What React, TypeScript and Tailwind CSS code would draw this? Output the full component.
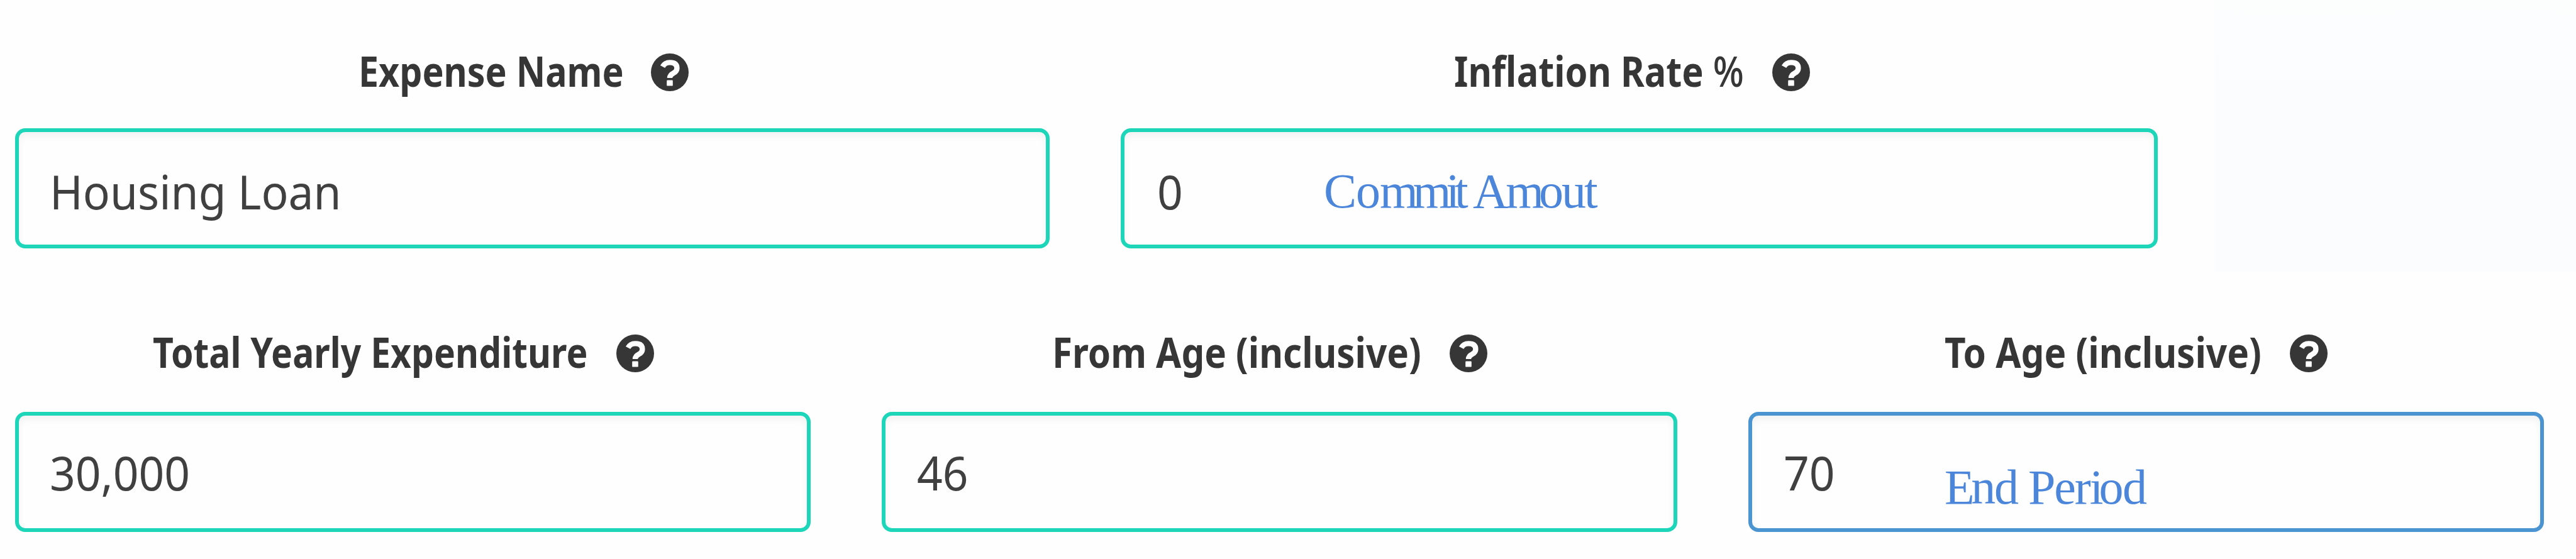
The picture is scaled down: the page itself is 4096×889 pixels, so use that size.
import type { ReactNode } from "react";

type FieldProps = {
  label: ReactNode;
  value: string;
  width: string;
  labelGap: string;
  labelStart: string;
  labelWidth: string;
  labelScale: string;
  valueInset: string;
  tone?: string;
  children?: ReactNode;
};

function HelpIcon() {
  return (
    <svg viewBox="0 0 100 100" className="mt-[5px] size-[60px] shrink-0" aria-hidden="true">
      <circle cx="50" cy="50" r="50" fill="#363636" />
      <path d="M31 35Q37 24 50 24Q69 24 69 39Q69 47 60 52Q50 57 50 65" fill="none" stroke="#fefefe" strokeWidth="14" />
      <rect x="42" y="71" width="16" height="15" rx="2" fill="#fefefe" />
    </svg>
  );
}

function Field(p: FieldProps) {
  return (
    <div className={`flex flex-col ${p.width} ${p.labelGap}`}>
      <div className={`flex h-[80px] items-center text-[#363636] ${p.labelStart}`}>
        <label className={`block whitespace-nowrap ${p.labelWidth}`}>
          <span className={`inline-block origin-left text-[67px] leading-[80px] font-bold ${p.labelScale}`}>{p.label}</span>
        </label>
        <HelpIcon />
      </div>
      <div
        className={`relative h-[191px] rounded-[16px] border-[6px] bg-[#fefefe] shadow-[inset_0_6px_12px_rgba(10,10,10,0.05)] ${p.valueInset} ${p.tone ?? "border-[#1dd6ba]"}`}
      >
        <span className="inline-block origin-left scale-x-[0.957] text-[74.5px] leading-[100px] whitespace-nowrap text-[#404040]">
          {p.value}
        </span>
        {p.children}
      </div>
    </div>
  );
}

export default function App() {
  return (
    <main className="h-[889px] w-[4096px] overflow-hidden bg-[#fefefe] font-['Noto_Sans',sans-serif]">
      <div className="flex h-[432px] justify-between">
        <div className="flex gap-[113px] pt-[72px] pl-[24px]">
          <Field
            label="Expense Name"
            value="Housing Loan"
            width="w-[1645px]"
            labelGap="gap-[52px]"
            labelStart="pl-[546px]"
            labelWidth="w-[465px]"
            labelScale="scale-x-[0.855]"
            valueInset="pt-[44px] pl-[49px]"
          />
          <Field
            label={<>Inflation Rate <span className="font-medium">%</span></>}
            value="0"
            width="w-[1649px]"
            labelGap="gap-[52px]"
            labelStart="pl-[530px]"
            labelWidth="w-[506px]"
            labelScale="scale-x-[0.86]"
            valueInset="pt-[44px] pl-[52px]"
          >
            <span className="absolute top-[44px] left-[317px] font-['Liberation_Serif',serif] text-[78px] leading-[100px] whitespace-nowrap text-[#4c86da]">
              <span className="tracking-[-1px]">Co</span>
              <span className="tracking-[-8px]">mmi</span>
              <span className="tracking-[-4px]">t A</span>
              <span className="tracking-[-8px]">m</span>
              <span className="tracking-[-3px]">out</span>
            </span>
          </Field>
        </div>
        <aside className="w-[575px] bg-linear-to-b from-[#fcfefe] to-[#fbfcfe] to-30%" />
      </div>
      <div className="flex gap-[113px] pt-[87px] pl-[24px]">
        <Field
          label="Total Yearly Expenditure"
          value="30,000"
          width="w-[1265px]"
          labelGap="gap-[56px]"
          labelStart="pl-[219px]"
          labelWidth="w-[737px]"
          labelScale="scale-x-[0.851]"
          valueInset="pt-[40px] pl-[49px]"
        />
        <Field
          label="From Age (inclusive)"
          value="46"
          width="w-[1265px]"
          labelGap="gap-[56px]"
          labelStart="pl-[271px]"
          labelWidth="w-[632px]"
          labelScale="scale-x-[0.869]"
          valueInset="pt-[40px] pl-[50px]"
        />
        <Field
          label="To Age (inclusive)"
          value="70"
          width="w-[1265px]"
          labelGap="gap-[56px]"
          labelStart="pl-[312px]"
          labelWidth="w-[549px]"
          labelScale="scale-x-[0.871]"
          valueInset="pt-[40px] pl-[50px]"
          tone="border-[#4a94d2]"
        >
          <span className="absolute top-[64px] left-[306px] font-['Liberation_Serif',serif] text-[78px] leading-[100px] whitespace-nowrap text-[#4c86da]">
            <span className="tracking-[-5.5px]">E</span>
            <span className="tracking-[-2.2px]">nd P</span>
            <span className="tracking-[-2px]">er</span>
            <span className="tracking-[-7px]">i</span>
            <span className="tracking-[-1.6px]">od</span>
          </span>
        </Field>
      </div>
    </main>
  );
}
